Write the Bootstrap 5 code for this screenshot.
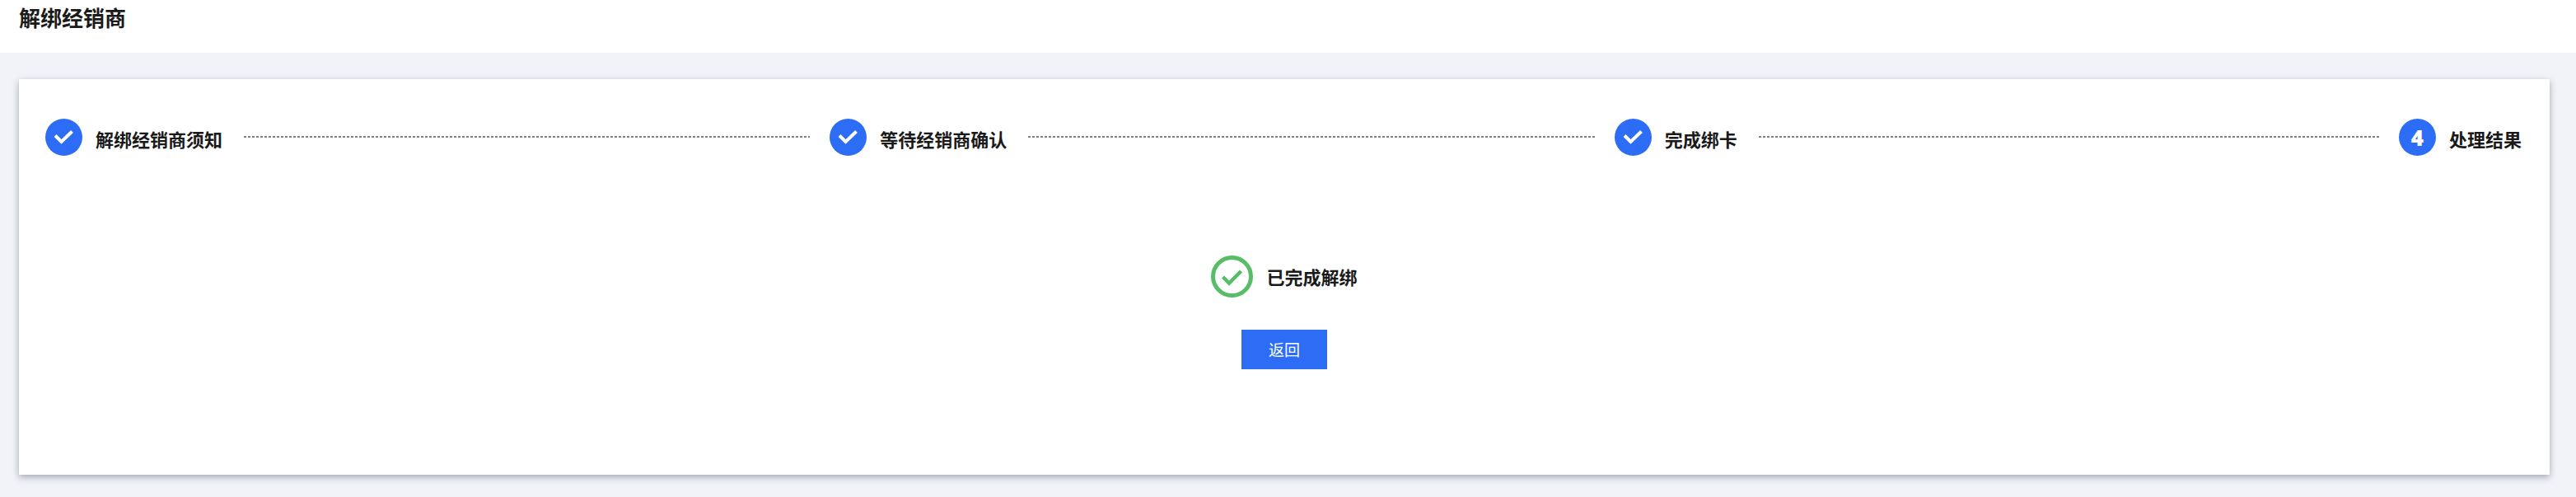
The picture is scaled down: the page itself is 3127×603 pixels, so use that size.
<!DOCTYPE html>
<html lang="zh-CN">
<head>
<meta charset="utf-8">
<meta name="viewport" content="width=device-width, initial-scale=1">
<title>解绑经销商</title>
<link href="https://cdn.jsdelivr.net/npm/bootstrap@5.3.0/dist/css/bootstrap.min.css" rel="stylesheet">
<style>
  body { font-family: "Noto Sans CJK SC", "Noto Sans", sans-serif; background: #f2f3f8; color: #1a1a1a; }
  .page-head { height: 64px; padding-left: 23px; }
  .page-title { font-size: 26px; line-height: 42px; }
  .page-main { padding: 32px 32px 27px 23px; }
  .panel { padding: 48px 32px 128px; box-shadow: 0 3px 8px rgba(26, 32, 56, .36); }
  .step-dot { width: 45px; height: 45px; background: #2d6df6; color: #fff; }
  .step-number { font: 800 26px/1 "Open Sans", "Noto Sans", sans-serif; }
  .step-text { font-size: 22px; line-height: 30px; padding-top: 2px; }
  .step-line { height: 2px; margin: 0 24px 1px 26px; background: repeating-linear-gradient(90deg, #808080 0 3px, transparent 3px 5px); }
  .step-last { min-width: 151px; }
  .result { height: 51px; margin-top: 121px; gap: 16px; }
  .result-text { font-size: 22px; line-height: 30px; padding-bottom: 2px; }
  .btn-back { --bs-btn-bg: #2d6df6; --bs-btn-border-color: #2d6df6; width: 104px; height: 48px; margin-top: 39px; font-size: 19px; line-height: 28px; }
</style>
</head>
<body>
<header class="page-head bg-white">
  <h1 class="page-title fw-bold m-0">解绑经销商</h1>
</header>
<main class="page-main">
  <section class="panel bg-white">
    <ol class="list-unstyled d-flex m-0">
      <li class="d-flex align-items-center flex-fill w-100">
        <span class="step-dot rounded-circle flex-shrink-0 me-3">
          <svg class="d-block" width="45" height="45" viewBox="0 0 45 45" fill="none" stroke="#fff" stroke-width="4" aria-hidden="true"><path d="M12 20.5l7.5 7.5L32.500 15.500"/></svg>
        </span>
        <span class="step-text fw-bold text-nowrap">解绑经销商须知</span>
        <span class="step-line flex-fill"></span>
      </li>
      <li class="d-flex align-items-center flex-fill w-100">
        <span class="step-dot rounded-circle flex-shrink-0 me-3">
          <svg class="d-block" width="45" height="45" viewBox="0 0 45 45" fill="none" stroke="#fff" stroke-width="4" aria-hidden="true"><path d="M12 20.5l7.5 7.5L32.500 15.500"/></svg>
        </span>
        <span class="step-text fw-bold text-nowrap">等待经销商确认</span>
        <span class="step-line flex-fill"></span>
      </li>
      <li class="d-flex align-items-center flex-fill w-100">
        <span class="step-dot rounded-circle flex-shrink-0 me-3">
          <svg class="d-block" width="45" height="45" viewBox="0 0 45 45" fill="none" stroke="#fff" stroke-width="4" aria-hidden="true"><path d="M12 20.5l7.5 7.5L32.500 15.500"/></svg>
        </span>
        <span class="step-text fw-bold text-nowrap">完成绑卡</span>
        <span class="step-line flex-fill"></span>
      </li>
      <li class="step-last d-flex align-items-center flex-shrink-0" aria-current="step">
        <span class="step-dot step-number rounded-circle flex-shrink-0 me-3 d-flex align-items-center justify-content-center">4</span>
        <span class="step-text fw-bold text-nowrap">处理结果</span>
      </li>
    </ol>
    <div class="result d-flex align-items-center justify-content-center">
      <svg width="51" height="51" viewBox="0 0 51 51" fill="none" stroke="#57bd66" aria-hidden="true"><circle cx="25.500" cy="25.500" r="23" stroke-width="5"/><path d="M14.500 26l7.500 7.500L36.500 19" stroke-width="4.500"/></svg>
      <span class="result-text fw-bold">已完成解绑</span>
    </div>
    <button type="button" class="btn btn-primary btn-back d-block mx-auto rounded-0 p-0">返回</button>
  </section>
</main>
<script src="https://cdn.jsdelivr.net/npm/bootstrap@5.3.0/dist/js/bootstrap.bundle.min.js"></script>
</body>
</html>
